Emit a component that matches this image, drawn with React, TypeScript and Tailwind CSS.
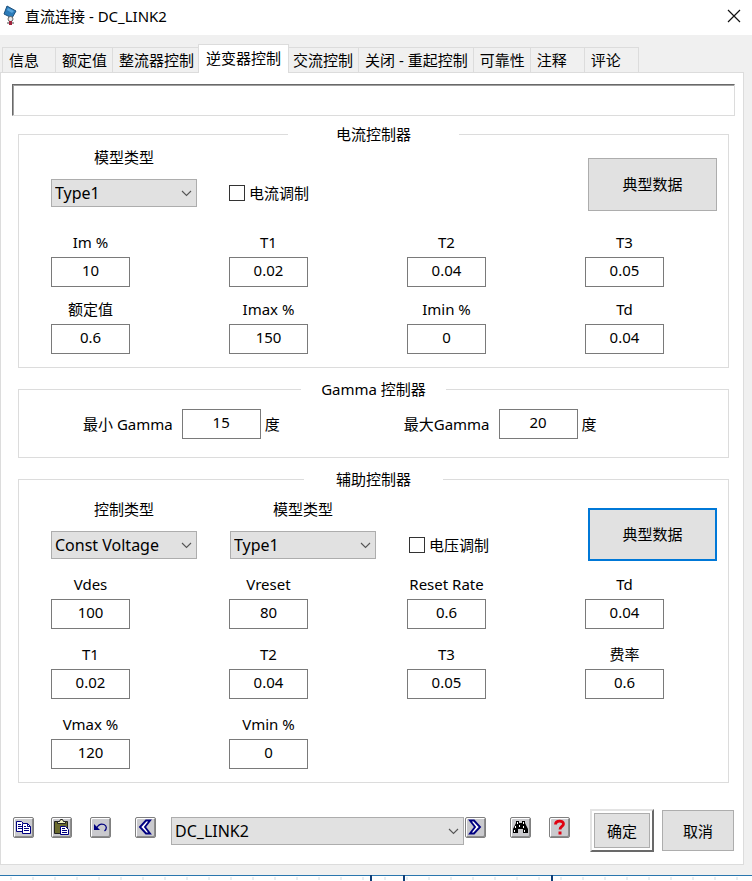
import { useState } from 'react'
import type { ReactNode } from 'react'

interface FieldDef {
  id:    string
  label: string
  value: string
}

const TABS = ['信息', '额定值', '整流器控制', '逆变器控制', '交流控制', '关闭 - 重起控制', '可靠性', '注释', '评论']

const CURRENT_FIELDS: FieldDef[] = [
  { id: 'cur-im',   label: 'Im %',   value: '10' },
  { id: 'cur-t1',   label: 'T1',     value: '0.02' },
  { id: 'cur-t2',   label: 'T2',     value: '0.04' },
  { id: 'cur-t3',   label: 'T3',     value: '0.05' },
  { id: 'cur-rate', label: '额定值', value: '0.6' },
  { id: 'cur-imax', label: 'Imax %', value: '150' },
  { id: 'cur-imin', label: 'Imin %', value: '0' },
  { id: 'cur-td',   label: 'Td',     value: '0.04' },
]

const AUX_FIELDS: FieldDef[] = [
  { id: 'aux-vdes',   label: 'Vdes',       value: '100' },
  { id: 'aux-vreset', label: 'Vreset',     value: '80' },
  { id: 'aux-rrate',  label: 'Reset Rate', value: '0.6' },
  { id: 'aux-td',     label: 'Td',         value: '0.04' },
  { id: 'aux-t1',     label: 'T1',         value: '0.02' },
  { id: 'aux-t2',     label: 'T2',         value: '0.04' },
  { id: 'aux-t3',     label: 'T3',         value: '0.05' },
  { id: 'aux-rate',   label: '费率',       value: '0.6' },
  { id: 'aux-vmax',   label: 'Vmax %',     value: '120' },
  { id: 'aux-vmin',   label: 'Vmin %',     value: '0' },
]

const inputClass = 'w-[79px] h-[30px] border border-[#7a7a7a] bg-white pb-1 text-center outline-none'

function Group({ title, gap, className, children }: {
  title: string, gap: string, className: string, children: ReactNode
}) {
  return (
    <fieldset className="min-w-0 border border-[#dcdcdc]">
      <legend className={`mx-auto ${gap}`}>{title}</legend>
      <div className={`pl-8 pr-[11px] ${className}`}>{children}</div>
    </fieldset>
  )
}

function Field({ id, label, value }: FieldDef) {
  return (
    <div className="flex w-[79px] flex-col items-center gap-1">
      <label htmlFor={id} className="whitespace-nowrap">{label}</label>
      <input id={id} type="text" defaultValue={value} className={inputClass}/>
    </div>
  )
}

function Select({ id, options, label }: { id: string, options: string[], label?: string }) {
  return (
    <div className="relative">
      <select id={id} aria-label={label}
              className="block h-[28px] w-full appearance-none border border-[#adadad] bg-[#e1e1e1]
                         pl-[3px] pr-5 text-[16px] leading-[22px] outline-none">
        {options.map(o => <option key={o}>{o}</option>)}
      </select>
      <svg className="pointer-events-none absolute right-[5px] top-[11px] h-[7px] w-[11px]"
           viewBox="0 0 11 7" fill="none" stroke="#555" strokeWidth="1.1">
        <path d="M1 1l4.5 4.5L10 1"/>
      </svg>
    </div>
  )
}

function LabeledSelect({ id, label, options }: { id: string, label: string, options: string[] }) {
  return (
    <div className="flex w-[146px] flex-col gap-[11px]">
      <label htmlFor={id} className="text-center">{label}</label>
      <Select id={id} options={options}/>
    </div>
  )
}

function Check({ label }: { label: string }) {
  return (
    <label className="flex items-center gap-1 pt-9">
      <input type="checkbox"
             className="h-4 w-4 appearance-none border border-[#333] bg-white checked:bg-[#0078d7]"/>
      {label}
    </label>
  )
}

function GammaField({ id, label, value }: FieldDef) {
  return (
    <div className="flex items-center">
      <label htmlFor={id} className="mr-[9px]">{label}</label>
      <input id={id} type="text" defaultValue={value} className={inputClass}/>
      <span className="ml-1">度</span>
    </div>
  )
}

function ToolButton({ title, className = '', children }: {
  title: string, className?: string, children: ReactNode
}) {
  return (
    <button type="button" aria-label={title}
            className={`h-[21px] w-[21px] shrink-0 rounded-[2px] border border-[#808080] bg-[#cacace]
                        shadow-[inset_1px_1px_0_#fff,inset_-1px_-1px_0_#8c8c8c] ${className}`}>
      <svg viewBox="0 0 19 19" className="h-[19px] w-[19px]">{children}</svg>
    </button>
  )
}

export default function App() {
  const [tab, setTab] = useState('逆变器控制')

  return (
    <div className="flex min-h-screen flex-col bg-[#f0f0f0] text-[15px] leading-[22px] text-black
                    font-['Noto_Sans','Noto_Sans_CJK_SC',sans-serif]">
      {/* Title bar */}
      <header className="flex h-[35px] items-center bg-white pb-[3px] pl-[3px] pr-[11px]">
        <svg viewBox="0 0 14 22" className="mr-2 h-[22px] w-[14px]">
          <path d="M4 1l9 5-4 7-8-4z" fill="#2b7bb9" stroke="#1d4f7a" strokeWidth="1"/>
          <path d="M5 3l6 3-2 2-5-3z" fill="#5aa5dc"/>
          <circle cx="7.500" cy="14" r="2.500" fill="#e8e8e8" stroke="#666"/>
          <path d="M6 16h3v4H6z" fill="#a0243c"/>
          <path d="M5 17v2M10 17v2" stroke="#444"/>
        </svg>
        <h1 className="flex-1">直流连接 - DC_LINK2</h1>
        <button type="button" aria-label="关闭">
          <svg viewBox="0 0 14 14" className="h-[14px] w-[14px]" stroke="#111" strokeWidth="1.200">
            <path d="M1 1l12 12M13 1L1 13"/>
          </svg>
        </button>
      </header>

      {/* Tabs */}
      <div role="tablist" className="flex items-end pl-[2px] pt-[9px]">
        {TABS.map((t, i) => (
          <button key={t} type="button" role="tab" aria-selected={t === tab} onClick={() => setTab(t)}
                  className={t === tab
                    ? 'relative -mx-[2px] -mb-px h-[29px] whitespace-nowrap border border-b-0 border-[#dcdcdc] bg-white px-[7px] pb-[2px] text-left'
                    : `h-[25px] min-w-[54px] whitespace-nowrap border-r border-t border-[#dcdcdc] pl-[6px] pr-[5px] text-left ${i === 0 ? 'border-l' : ''}`}>
            {t}
          </button>
        ))}
      </div>

      <main className="mr-2 border border-[#dcdcdc] bg-white pb-3 pl-[11px] pr-2 pt-[11px]">
        <input type="text" aria-label="状态"
               className="block h-8 w-full border border-b-[#dcdcdc] border-l-[#696969] border-r-[#dcdcdc]
                          border-t-[#696969] bg-white px-1 shadow-[inset_1px_1px_0_#a0a0a0] outline-none"/>

        <div className="ml-[6px] mr-[6px] mt-[7px] flex flex-col gap-[10px]">
          <Group title="电流控制器" gap="px-12" className="pb-[13px]">
            <div className="flex items-start gap-8 pt-px">
              <LabeledSelect id="cur-model" label="模型类型" options={['Type1', 'Type2']}/>
              <Check label="电流调制"/>
              <button type="button"
                      className="ml-auto mt-3 h-[53px] w-[129px] border border-[#adadad] bg-[#e1e1e1] pb-[2px]">
                典型数据
              </button>
            </div>
            <div className="mt-5 grid grid-cols-4 gap-x-[46px] gap-y-[11px]">
              {CURRENT_FIELDS.map(f => <Field key={f.id} {...f}/>)}
            </div>
          </Group>

          <Group title="Gamma 控制器" gap="px-5" className="pb-[18px]">
            <div className="flex gap-[124px] pl-8 pt-[9px]">
              <GammaField id="gamma-min" label="最小 Gamma" value="15"/>
              <GammaField id="gamma-max" label="最大Gamma" value="20"/>
            </div>
          </Group>

          <Group title="辅助控制器" gap="px-8" className="pb-[13px]">
            <div className="flex items-start gap-[33px] pt-2">
              <LabeledSelect id="aux-ctrl" label="控制类型" options={['Const Voltage', 'Const Current']}/>
              <LabeledSelect id="aux-model" label="模型类型" options={['Type1', 'Type2']}/>
              <Check label="电压调制"/>
              <button type="button"
                      className="ml-auto mt-[10px] h-[53px] w-[129px] border-2 border-[#0078d7] bg-[#e1e1e1] pb-[2px]">
                典型数据
              </button>
            </div>
            <div className="mt-3 grid grid-cols-4 gap-x-[46px] gap-y-[14px]">
              {AUX_FIELDS.map(f => <Field key={f.id} {...f}/>)}
            </div>
          </Group>
        </div>

        {/* Bottom toolbar */}
        <div className="mt-[26px] flex items-start pr-px">
          <div className="flex flex-1 items-start pl-px pt-2">
            <ToolButton title="复制">
              <g stroke="#000080" fill="#fff">
                <path d="M2.500 3.500h5l2 2v8h-7z"/>
                <path d="M4 6.500h3M4 8.500h4M4 10.500h4" fill="none"/>
                <path d="M8.500 5.500h5l3 3v7h-8z"/>
                <path d="M13.500 5.500v3h3M10 8.500h2M10 10.500h5M10 12.500h5" fill="none"/>
              </g>
            </ToolButton>
            <ToolButton title="粘贴" className="ml-[17px]">
              <path d="M2.500 3.500h13v12h-13z" fill="#6b6b2e" stroke="#222"/>
              <path d="M5.500 5.500v-2h2l1-2h2l1 2h2v2z" fill="#f0f0c0" stroke="#222"/>
              <path d="M8.500 8.500h5l3 3v5h-8z" fill="#fff" stroke="#000080"/>
              <path d="M10 10.500h3M10 12.500h5M10 14.500h5" stroke="#000080"/>
            </ToolButton>
            <ToolButton title="撤销" className="ml-[18px]">
              <path d="M3 6v6h6z" fill="#000080"/>
              <path d="M5.500 10c2-3.500 5-4.500 7.500-3.500 3 1.300 3 4.500.5 6.500" fill="none" stroke="#000080" strokeWidth="1.300"/>
            </ToolButton>
            <ToolButton title="上一个" className="ml-6">
              <path d="M14 2.500h-4L4 9l6 6.500h4L9 9z" fill="#fff" stroke="#000080" strokeWidth="1.900"/>
            </ToolButton>
            <div className="ml-[15px] mr-px flex-1">
              <Select id="link" label="DC 连接" options={['DC_LINK2', 'DC_LINK1']}/>
            </div>
            <ToolButton title="下一个">
              <path d="M4 2.500h4L14 9l-6 6.500H4L9 9z" fill="#fff" stroke="#000080" strokeWidth="1.900"/>
            </ToolButton>
            <ToolButton title="查找" className="ml-6">
              <path d="M5 3h3v2h3V3h3v2l3 6v4h-5v-4H7v4H2v-4l3-6z" fill="#000"/>
              <path d="M6.500 4v2M12.500 4v2M4.500 8v2M3.500 12v2M8.500 7v2M12.500 8v2M13.500 12v2" stroke="#fff"/>
            </ToolButton>
            <ToolButton title="帮助" className="ml-[18px]">
              <path d="M5.500 6.500c0-4.500 8-4.500 8-.5 0 2.500-3.500 2.500-3.500 5.500" fill="none" stroke="#e00010" strokeWidth="2.800"/>
              <path d="M8.500 13.500h3v3h-3z" fill="#e00010"/>
            </ToolButton>
          </div>
          <button type="button"
                  className="ml-5 h-[43px] w-[64px] border-2 border-b-[#696969] border-l-[#e3e3e3] border-r-[#696969]
                             border-t-[#e3e3e3] bg-white p-[2px]">
            <span className="flex h-full items-center justify-center border border-[#adadad] bg-[#e1e1e1]">确定</span>
          </button>
          <button type="button" className="ml-2 mt-px h-[41px] w-[72px] border border-[#adadad] bg-[#e1e1e1]">
            取消
          </button>
        </div>
      </main>

      {/* Diagram canvas under the window edge */}
      <svg className="mt-[10px] block h-[6px] w-full bg-white">
        <path d="M0 .5h752" stroke="#2a76ae"/>
        <path d="M10 3.500h742" stroke="#e8eef2" strokeWidth="3" strokeDasharray="2 20"/>
        <path d="M371 0v6M404 0v6M552 0v6" stroke="#0f3f78" strokeWidth="2"/>
      </svg>
    </div>
  )
}
